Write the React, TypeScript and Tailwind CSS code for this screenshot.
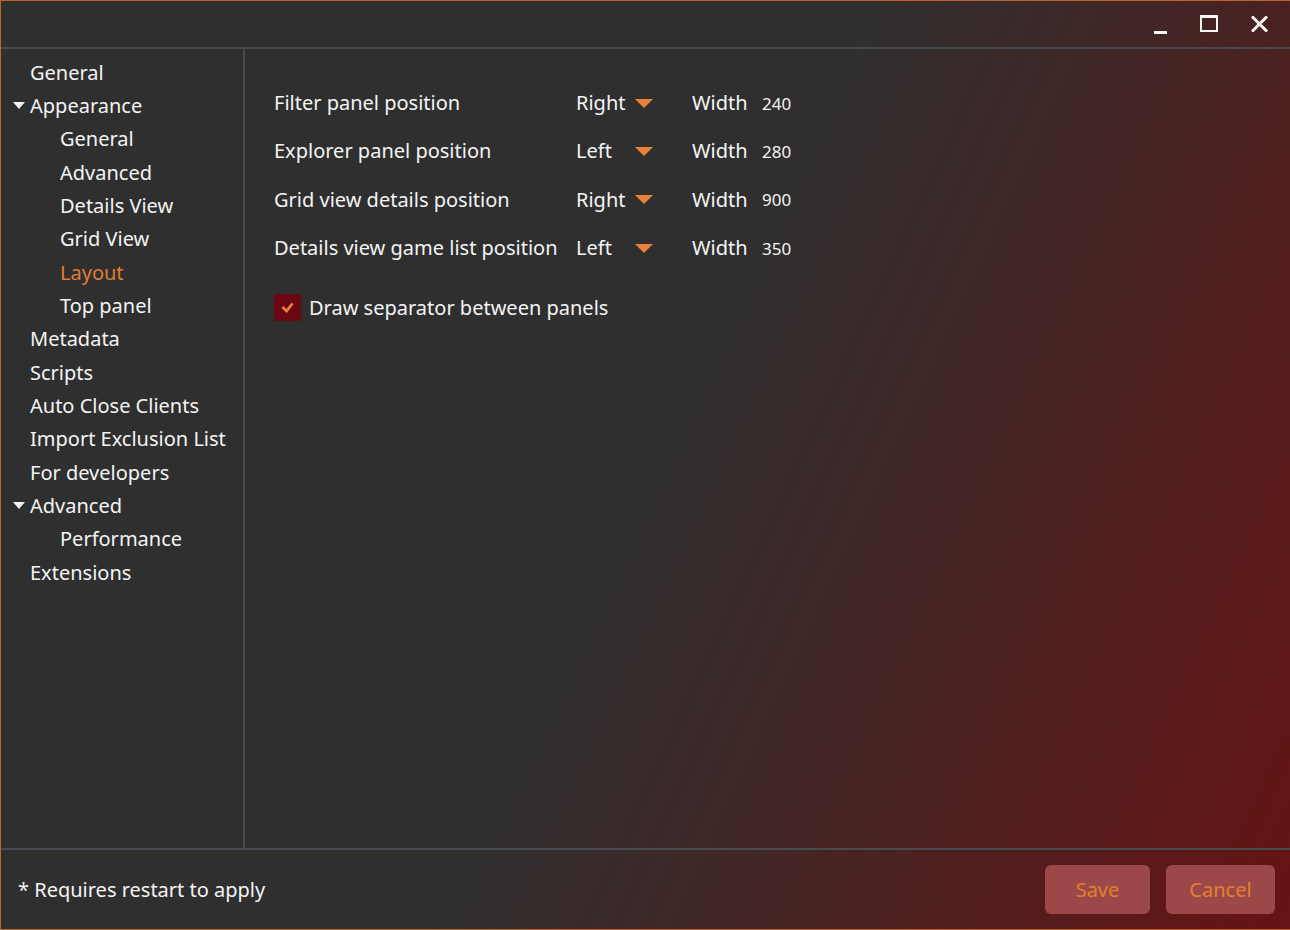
import React from "react";

const font = { fontFamily: '"Noto Sans", "DejaVu Sans", sans-serif' };

type Item = { label: string; level: 0 | 1; expander?: boolean; active?: boolean };

const items: Item[] = [
  { label: "General", level: 0 },
  { label: "Appearance", level: 0, expander: true },
  { label: "General", level: 1 },
  { label: "Advanced", level: 1 },
  { label: "Details View", level: 1 },
  { label: "Grid View", level: 1 },
  { label: "Layout", level: 1, active: true },
  { label: "Top panel", level: 1 },
  { label: "Metadata", level: 0 },
  { label: "Scripts", level: 0 },
  { label: "Auto Close Clients", level: 0 },
  { label: "Import Exclusion List", level: 0 },
  { label: "For developers", level: 0 },
  { label: "Advanced", level: 0, expander: true },
  { label: "Performance", level: 1 },
  { label: "Extensions", level: 0 },
];

const rows = [
  { label: "Filter panel position", value: "Right", width: "240" },
  { label: "Explorer panel position", value: "Left", width: "280" },
  { label: "Grid view details position", value: "Right", width: "900" },
  { label: "Details view game list position", value: "Left", width: "350" },
];

function Arrow() {
  return (
    <svg width="18" height="9" viewBox="0 0 18 9" className="block">
      <polygon points="0,0 18,0 9,9" fill="#e8823a" />
    </svg>
  );
}

export default function App() {
  return (
    <div
      className="w-[1290px] h-[930px] overflow-hidden border-t border-l border-b border-[#c0622a] text-[#f4f4f4] flex flex-col bg-[linear-gradient(115deg,#2f2f2f_50%,#661313_100%)]"
      style={font}
    >
      {/* title bar */}
      <div className="h-[46px] flex items-start justify-end shrink-0">
        <div className="flex items-center h-[46px] pr-[6px]">
          <div className="w-[48px] h-[46px] flex items-center justify-center">
            <div className="w-[13px] h-[3px] bg-[#f6f6f6] mt-[16px]" />
          </div>
          <div className="w-[50px] h-[46px] flex items-center justify-center">
            <div className="w-[18px] h-[17px] border-[#f6f6f6] border-t-[3px] border-x-2 border-b-2 mb-[1px]" />
          </div>
          <div className="w-[50px] h-[46px] flex items-center justify-center">
            <svg width="17" height="16" viewBox="0 0 17 16">
              <path d="M2 1.5 L15 14.5 M15 1.5 L2 14.5" stroke="#f6f6f6" strokeWidth="3" strokeLinecap="square" />
            </svg>
          </div>
        </div>
      </div>
      <div className="h-[2px] bg-[#464b52] shrink-0" />

      {/* main */}
      <div className="flex flex-1 min-h-0">
        <div className="w-[242px] shrink-0 pt-[7px] text-[20px]">
          {items.map((it, i) => (
            <div
              key={i}
              className={
                "h-[33.33px] flex items-center relative " +
                (it.level === 0 ? "pl-[29px] " : "pl-[59px] ") +
                (it.active ? "text-[#e07d35]" : "")
              }
            >
              {it.expander && (
                <svg width="12" height="7" viewBox="0 0 12 7" className="absolute left-[12px] top-[13px]">
                  <polygon points="0,0 12,0 6,7" fill="#f4f4f4" />
                </svg>
              )}
              <span className="leading-none">{it.label}</span>
            </div>
          ))}
        </div>
        <div className="w-[2px] bg-[#464b52] shrink-0" />
        <div className="flex-1 pl-[29px] pt-[30px] text-[20px]">
          {rows.map((r, i) => (
            <div key={i} className="h-[48.33px] flex items-center">
              <div className="w-[302px] leading-none">{r.label}</div>
              <div className="w-[116px] flex items-center">
                <div className="w-[59px] leading-none">{r.value}</div>
                <Arrow />
              </div>
              <div className="w-[70px] leading-none">Width</div>
              <div className="text-[17px] leading-none">{r.width}</div>
            </div>
          ))}
          <div className="flex items-center mt-[22px] h-[27px]">
            <div className="w-[27px] h-[27px] bg-[#6b0712] flex items-center justify-center">
              <svg width="13" height="11" viewBox="0 0 13 11">
                <path d="M1.5 5 L5.5 9 L11.5 1.5" stroke="#e8823a" strokeWidth="2.8" fill="none" />
              </svg>
            </div>
            <span className="ml-[8px] leading-none">Draw separator between panels</span>
          </div>
        </div>
      </div>

      <div className="h-[2px] bg-[#464b52] shrink-0" />
      {/* footer */}
      <div className="h-[79px] shrink-0 flex items-center justify-between pl-[17px] pr-[15px]">
        <span className="text-[20px] leading-none">* Requires restart to apply</span>
        <div className="flex gap-[16px]">
          <button className="w-[105px] h-[49px] rounded-[6px] bg-[#9c4849] text-[#e2802f] text-[20px]">Save</button>
          <button className="w-[109px] h-[49px] rounded-[6px] bg-[#9c4849] text-[#e2802f] text-[20px]">Cancel</button>
        </div>
      </div>
    </div>
  );
}
